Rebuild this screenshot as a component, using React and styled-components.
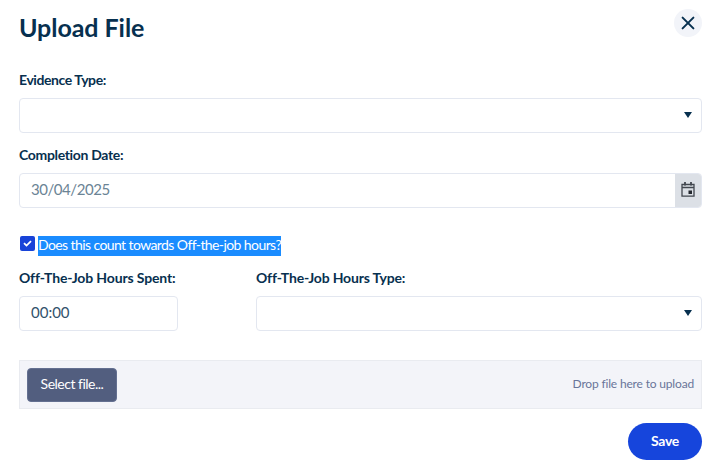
import React from 'react'
import styled, { createGlobalStyle } from 'styled-components';

const GlobalStyle = createGlobalStyle`
* { box-sizing: border-box; }
body {
margin:0;
background:#fff;
color:#07304f;
font-family: Lato, "Open Sans", sans-serif;
font-size:14px;
}
`;
const Dialog = styled.div`
height:474px;
padding:9px 17px 0 19px;
display:flex;
flex-direction:column;
`;
const Header = styled.div`
height:62px;
display:flex;
justify-content:space-between;
align-items:flex-start;
`;
const Title = styled.h1`
margin:0;
font-size:25px;
line-height:36px;
font-weight:700;
letter-spacing:-0.05px;
white-space:nowrap;
`;
const CloseButton = styled.button`
width:28px;
height:28px;
padding:0;
border:0;
border-radius:50%;
background:#f2f4f9;
display:flex;
align-items:center;
justify-content:center;
`;
const Field = styled.div`
width:${props => props.$width || '100%'};
height:${props => props.$height || '76px'};
`;
const Label = styled.label`
display:block;
height:27px;
line-height:18px;
font-size:14px;
font-weight:700;
letter-spacing:${props => props.$spacing || '0'};
white-space:nowrap;
`;
const InputBox = styled.div`
height:35px;
border:1.5px solid #e3e7f0;
border-radius:4px;
display:flex;
align-items:center;
justify-content:space-between;
overflow:hidden;
`;
const Value = styled.span`
padding-left:11px;
padding-bottom:4px;
font-size:15px;
color:${props => props.$muted ? '#6b8495' : '#32526b'};
letter-spacing:${props => props.$spacing || '0'};
`;
const Arrow = styled.svg`
width:8px;
height:6px;
margin:0 9px 1px auto;
`;
const CalendarButton = styled.div`
width:26px;
height:35px;
padding-bottom:2px;
background:#dce0e6;
display:flex;
align-items:center;
justify-content:center;
`;
const CheckRow = styled.div`
height:33px;
margin-top:14px;
display:flex;
align-items:flex-start;
gap:3px;
padding-left:1px;
`;
const Checkbox = styled.span`
width:15px;
height:15px;
border-radius:2px;
background:#1843d8;
display:flex;
align-items:center;
justify-content:center;
`;
const Selected = styled.span`
height:20px;
line-height:18px;
background:#1a8cff;
color:#fff;
font-size:14px;
letter-spacing:-0.59px;
white-space:nowrap;
`;
const Row = styled.div`
display:flex;
justify-content:space-between;
`;
const UploadArea = styled.div`
height:49px;
margin-top:15px;
padding:0 7px;
border:1px solid #e9ebf0;
background:#f3f4f9;
display:flex;
align-items:center;
justify-content:space-between;
`;
const SelectButton = styled.button`
width:90px;
height:34px;
padding:0 0 2px;
border:1px solid #647091;
border-radius:4px;
background:#525e7f;
color:#fff;
font-family:inherit;
font-size:14px;
letter-spacing:-0.5px;
white-space:nowrap;
`;
const DropHint = styled.span`
padding-bottom:2px;
font-size:12px;
color:#69759a;
letter-spacing:-0.17px;
`;
const SaveButton = styled.button`
align-self:flex-end;
width:74px;
height:37px;
margin-top:14px;
padding:0 0 2px;
border:0;
border-radius:19px;
background:#1645dc;
color:#fff;
font-family:inherit;
font-size:14px;
font-weight:700;
letter-spacing:-0.3px;
`;

const DownArrow = () => (
    <Arrow viewBox="0 0 8 6">
        <path d="M0 0h8L4 6z" fill="#07304f" />
    </Arrow>
)

const CalendarIcon = () => (
    <svg width="14" height="15" viewBox="0 0 14 15" fill="none" stroke="#42474f">
        <path d="M1 2.5h12v11.7H1zM1 5.5h12" strokeWidth="1.3" />
        <path d="M4 0v3.5M10 0v3.5" strokeWidth="1.8" />
        <path d="M7.5 8.5h3.5v3.5H7.5z" fill="#22262d" stroke="none" />
    </svg>
)

export default function App() {
    return (
        <>
        <GlobalStyle />
        <Dialog>
            <Header>
                <Title>Upload File</Title>
                <CloseButton aria-label="Close">
                    <svg width="14" height="14" viewBox="0 0 14 14">
                        <path d="M1.6 1.6l10.8 10.8M12.4 1.6L1.6 12.4" stroke="#07304f" strokeWidth="2" strokeLinecap="round" />
                    </svg>
                </CloseButton>
            </Header>
            <Field $height="75px">
                <Label $spacing="-0.42px">Evidence Type:</Label>
                <InputBox><DownArrow /></InputBox>
            </Field>
            <Field>
                <Label $spacing="-0.33px">Completion Date:</Label>
                <InputBox>
                    <Value $muted $spacing="-0.45px">30/04/2025</Value>
                    <CalendarButton><CalendarIcon /></CalendarButton>
                </InputBox>
            </Field>
            <CheckRow>
                <Checkbox>
                    <svg width="9" height="7" viewBox="0 0 9 7" fill="none">
                        <path d="M1 3.2l2.5 2.4L8 1.2" stroke="#fff" strokeWidth="1.8" />
                    </svg>
                </Checkbox>
                <Selected>Does this count towards Off-the-job hours?</Selected>
            </CheckRow>
            <Row>
                <Field $width="159px">
                    <Label $spacing="-0.13px">Off-The-Job Hours Spent:</Label>
                    <InputBox><Value>00:00</Value></InputBox>
                </Field>
                <Field $width="446px">
                    <Label $spacing="-0.18px">Off-The-Job Hours Type:</Label>
                    <InputBox><DownArrow /></InputBox>
                </Field>
            </Row>
            <UploadArea>
                <SelectButton>Select file...</SelectButton>
                <DropHint>Drop file here to upload</DropHint>
            </UploadArea>
            <SaveButton>Save</SaveButton>
        </Dialog>
        </>
    )
}
